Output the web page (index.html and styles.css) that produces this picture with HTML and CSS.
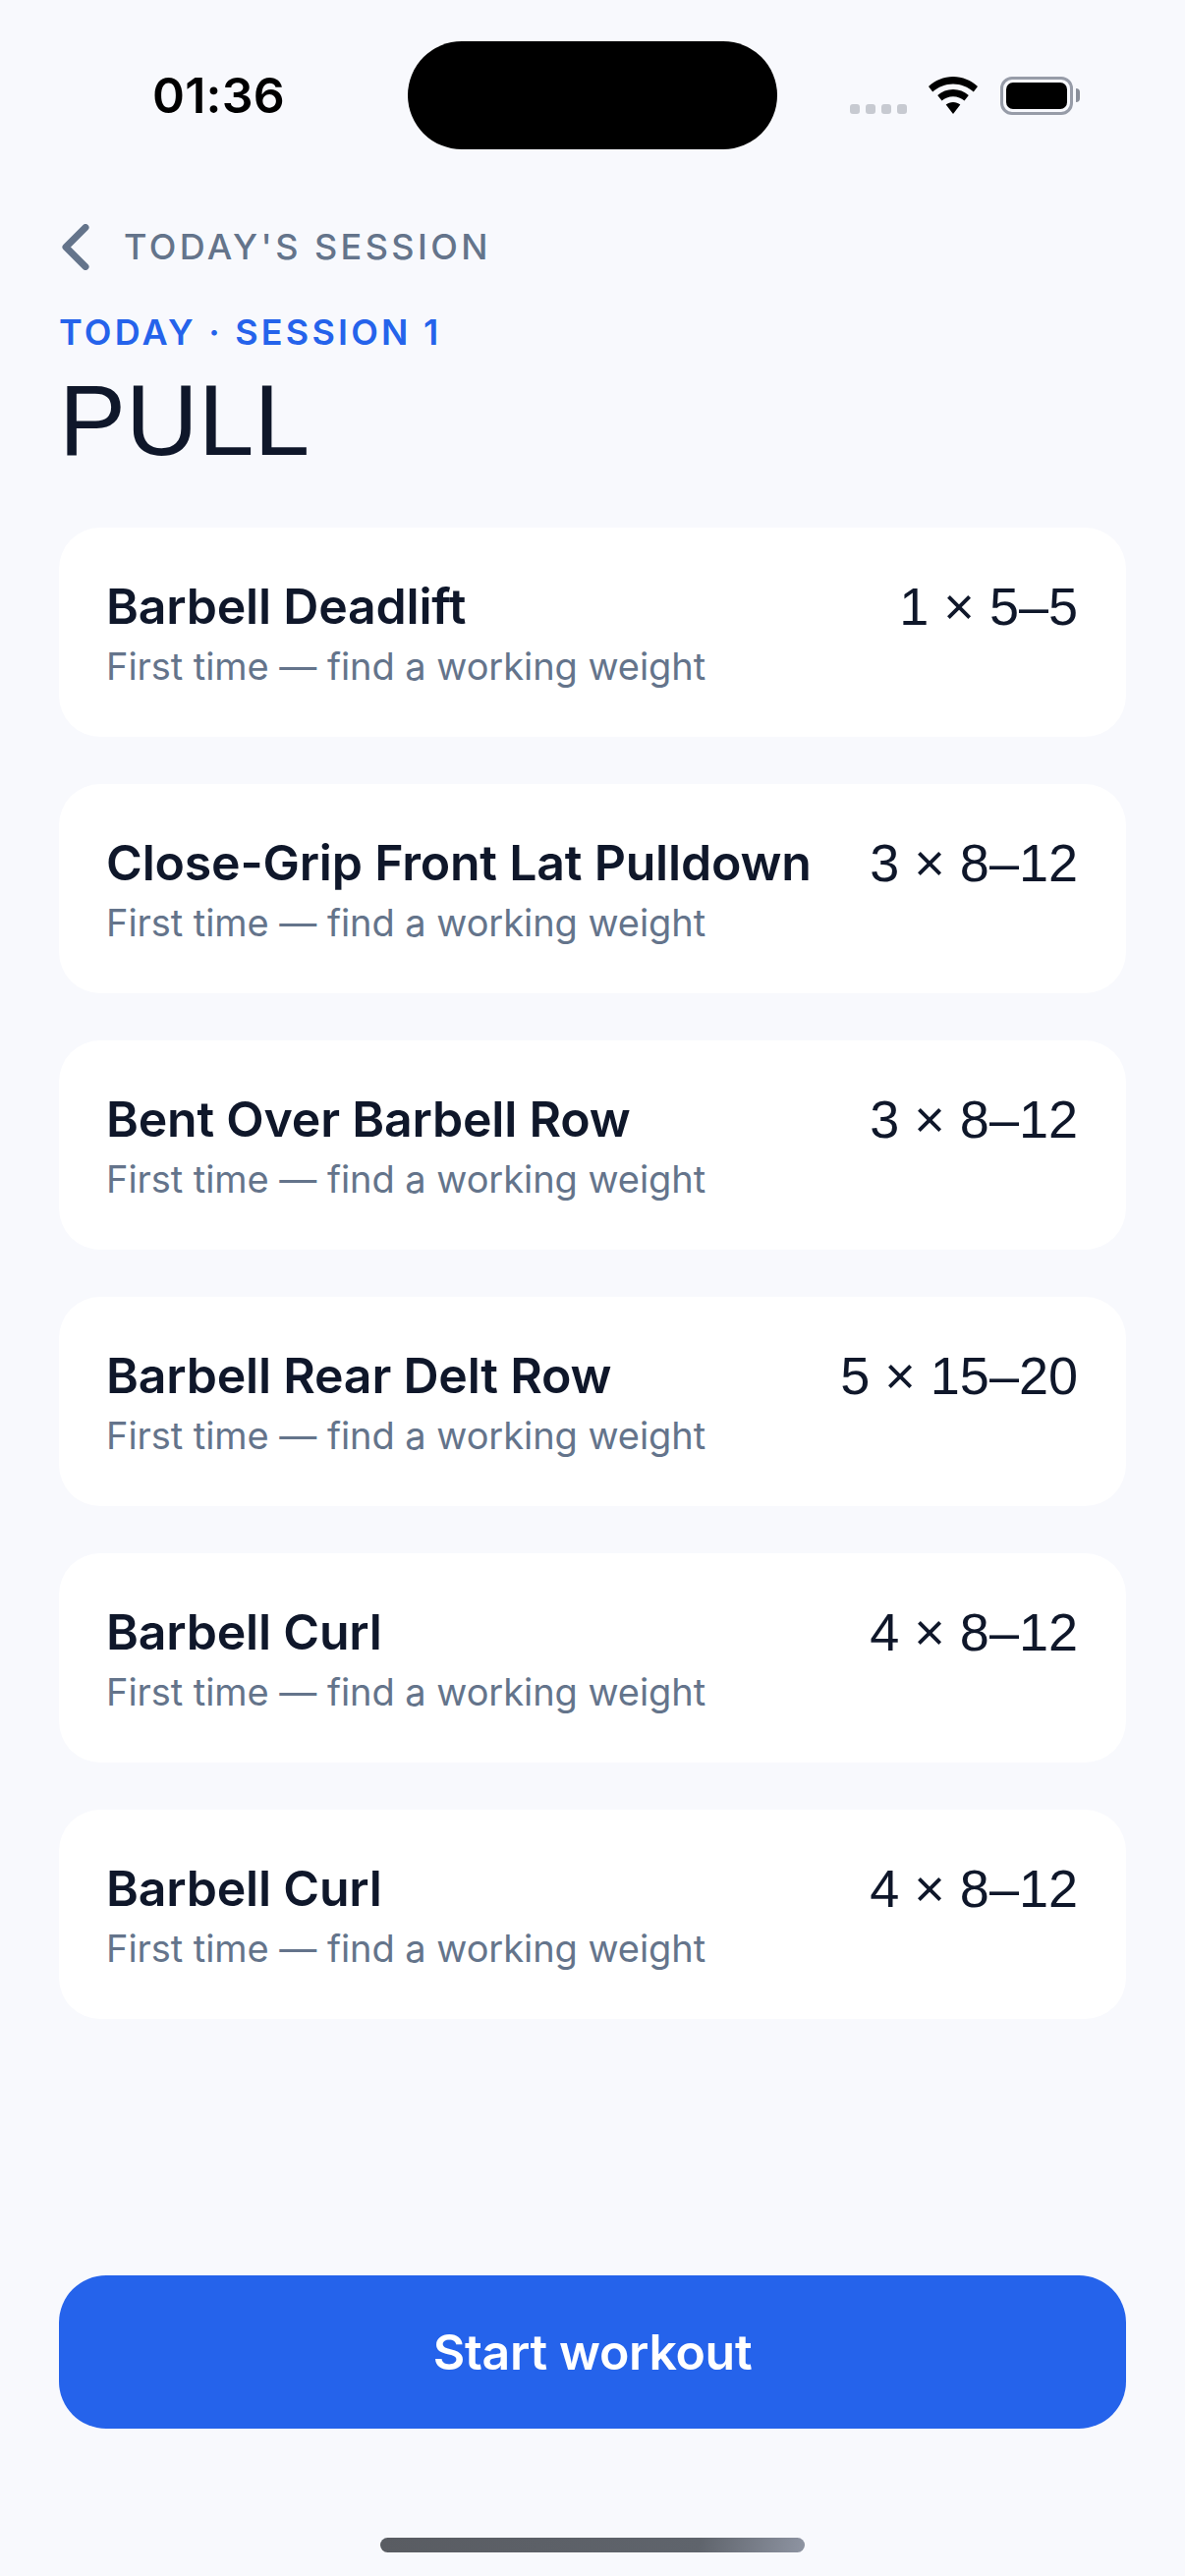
FILE: index.html
```html
<!DOCTYPE html>
<html lang="en">
<head>
    <meta charset="UTF-8">
    <meta name="viewport" content="width=device-width, initial-scale=1.0">
    <title>Pull | Today's Session</title>
    <link rel="stylesheet" href="styles.css">
</head>
<body>
    <div class="phone">
        <div class="status-bar">
            <div class="time">01:36</div>
            <div class="island"></div>
            <div class="status-icons">
                <div class="signal-dots"><span></span><span></span><span></span><span></span></div>
                <svg class="wifi" viewBox="0 0 50 38">
                    <path d="M25 0C34.500 0 43.200 3.700 50 10L45.800 15.500C40.300 10.500 33 7.500 25 7.500S9.700 10.500 4.200 15.500L0 10C6.800 3.700 15.500 0 25 0Z"/>
                    <path d="M25 13C31 13 36.500 15.300 40.800 19L36.500 24.500C33.400 21.900 29.400 20.300 25 20.300S16.600 21.900 13.500 24.500L9.200 19C13.500 15.300 19 13 25 13Z"/>
                    <path d="M25 26C27.800 26 30.300 26.900 32.300 28.500L25 38L17.700 28.500C19.700 26.900 22.200 26 25 26Z"/>
                </svg>
                <div class="battery">
                    <div class="battery-body"><div class="battery-fill"></div></div>
                    <div class="battery-nub"></div>
                </div>
            </div>
        </div>

        <div class="back-row">
            <svg class="back-icon" viewBox="0 0 28 47">
                <path d="M24 3.500L4 23.500L24 43.500" fill="none" stroke="#64748b" stroke-width="7" stroke-linecap="round" stroke-linejoin="round"/>
            </svg>
            <span class="back-label">TODAY'S SESSION</span>
        </div>

        <div class="eyebrow">TODAY · SESSION 1</div>
        <h1 class="title">PULL</h1>

        <div class="exercise-list">
            <div class="exercise-card">
                <div class="exercise-info">
                    <div class="exercise-name">Barbell Deadlift</div>
                    <div class="exercise-note">First time — find a working weight</div>
                </div>
                <div class="exercise-sets">1 × 5–5</div>
            </div>
            <div class="exercise-card">
                <div class="exercise-info">
                    <div class="exercise-name">Close-Grip Front Lat Pulldown</div>
                    <div class="exercise-note">First time — find a working weight</div>
                </div>
                <div class="exercise-sets">3 × 8–12</div>
            </div>
            <div class="exercise-card">
                <div class="exercise-info">
                    <div class="exercise-name">Bent Over Barbell Row</div>
                    <div class="exercise-note">First time — find a working weight</div>
                </div>
                <div class="exercise-sets">3 × 8–12</div>
            </div>
            <div class="exercise-card">
                <div class="exercise-info">
                    <div class="exercise-name">Barbell Rear Delt Row</div>
                    <div class="exercise-note">First time — find a working weight</div>
                </div>
                <div class="exercise-sets">5 × 15–20</div>
            </div>
            <div class="exercise-card">
                <div class="exercise-info">
                    <div class="exercise-name">Barbell Curl</div>
                    <div class="exercise-note">First time — find a working weight</div>
                </div>
                <div class="exercise-sets">4 × 8–12</div>
            </div>
            <div class="exercise-card">
                <div class="exercise-info">
                    <div class="exercise-name">Barbell Curl</div>
                    <div class="exercise-note">First time — find a working weight</div>
                </div>
                <div class="exercise-sets">4 × 8–12</div>
            </div>
        </div>

        <button class="start-button">Start workout</button>
        <div class="home-bar"></div>
    </div>
</body>
</html>
```

FILE: styles.css
```css
html, body {
    margin: 0;
    padding: 0;
}
body {
    font-family: 'Inter', sans-serif;
    background-color: #f8f9fd;
    color: #0f172a;
}
.phone {
    width: 1206px;
    height: 2622px;
    box-sizing: border-box;
    padding: 42px 60px 24px;
    display: flex;
    flex-direction: column;
    overflow: hidden;
}
.status-bar {
    height: 110px;
    display: flex;
    align-items: center;
}
.time {
    width: 355px;
    padding-left: 95px;
    box-sizing: border-box;
    font-size: 50px;
    font-weight: 600;
    letter-spacing: 0.2px;
    color: #000;
}
.island {
    width: 376px;
    height: 110px;
    border-radius: 55px;
    background-color: #000;
}
.status-icons {
    display: flex;
    align-items: center;
    margin-left: 74px;
}
.signal-dots {
    display: flex;
    gap: 6px;
    align-self: flex-end;
    margin-bottom: 1px;
}
.signal-dots span {
    width: 10px;
    height: 10px;
    border-radius: 3px;
    background-color: #c7cad1;
}
.wifi {
    width: 50px;
    height: 38px;
    margin-left: 22px;
}
.battery {
    display: flex;
    align-items: center;
    margin-left: 23px;
}
.battery-body {
    width: 74px;
    height: 39px;
    box-sizing: border-box;
    border: 3px solid #979ca8;
    border-radius: 12px;
    padding: 3px;
}
.battery-fill {
    height: 100%;
    background-color: #000;
    border-radius: 7px;
}
.battery-nub {
    width: 4px;
    height: 14px;
    margin-left: 3px;
    background-color: #8a8f9a;
    border-radius: 0 7px 7px 0;
}
.back-row {
    display: flex;
    align-items: center;
    margin-top: 71px;
    height: 56px;
}
.back-icon {
    width: 28px;
    height: 47px;
    margin-left: 3px;
}
.back-label {
    margin-left: 35px;
    font-size: 36px;
    font-weight: 500;
    letter-spacing: 3.4px;
    color: #64748b;
}
.eyebrow {
    margin-top: 37px;
    font-size: 36px;
    font-weight: 600;
    letter-spacing: 3.2px;
    color: #2563eb;
}
.title {
    margin: 13px 0 0;
    font-family: 'Liberation Sans', sans-serif;
    font-size: 102px;
    font-weight: 400;
    line-height: 110px;
}
.exercise-list {
    margin-top: 54px;
    display: flex;
    flex-direction: column;
    gap: 48px;
}
.exercise-card {
    height: 213px;
    box-sizing: border-box;
    padding: 51px 49px 0 48px;
    background-color: #fff;
    border-radius: 42px;
    display: flex;
    justify-content: space-between;
    align-items: flex-start;
}
.exercise-name {
    font-size: 50px;
    font-weight: 600;
    letter-spacing: -0.2px;
    line-height: 58px;
}
.exercise-note {
    margin-top: 8px;
    font-size: 38px;
    letter-spacing: -0.05px;
    line-height: 48px;
    color: #64748b;
}
.exercise-sets {
    font-family: 'Liberation Sans', sans-serif;
    font-size: 54px;
    line-height: 58px;
}
.start-button {
    margin-top: auto;
    height: 156px;
    border: none;
    border-radius: 48px;
    background-color: #2563eb;
    color: #fff;
    font-family: 'Inter', sans-serif;
    font-size: 50px;
    font-weight: 600;
    letter-spacing: -0.3px;
}
.home-bar {
    width: 432px;
    height: 15px;
    margin: 111px auto 0;
    border-radius: 8px;
    background: linear-gradient(100deg, #595c62 0%, #5f646c 75%, #8e94a2 100%);
}
```
